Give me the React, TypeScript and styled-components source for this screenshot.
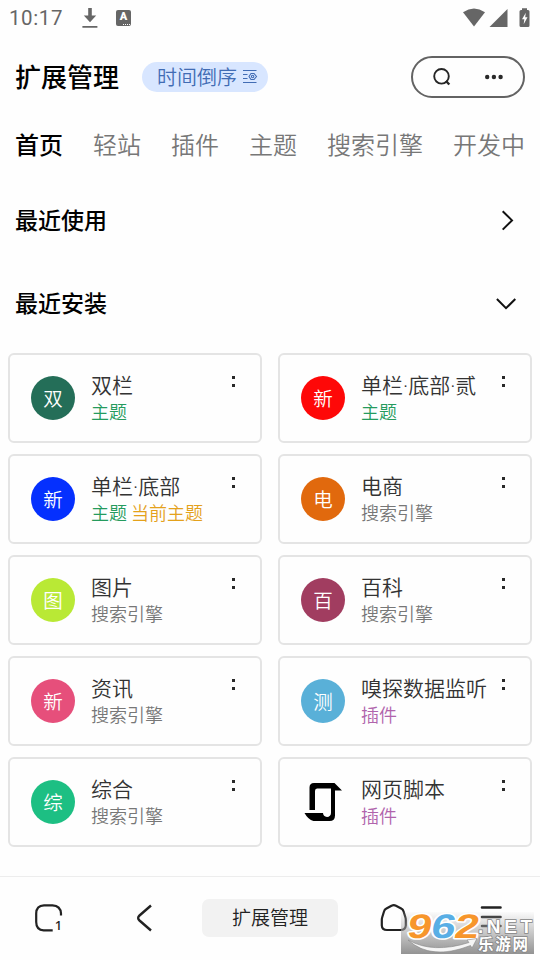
import React from "react";
import styled, { createGlobalStyle } from "styled-components";

const GlobalStyle = createGlobalStyle`
  * { box-sizing: border-box; }
  body {
    margin: 0;
    background: #fefefe;
    font-family: Roboto, "Noto Sans CJK SC", sans-serif;
  }
  svg { display: block; flex: none; overflow: visible; }
`;

const Screen = styled.div`
  width: 540px;
  height: 960px;
  display: flex;
  flex-direction: column;
  overflow: hidden;
  background: #fefefe;
`;

const StatusBar = styled.div`
  height: 37px;
  padding: 0 9px;
  display: flex;
  justify-content: space-between;
  color: #666;
`;

const StatusGroup = styled.div`
  display: flex;
  align-items: center;
`;

const Clock = styled.span`
  width: 73px;
  font-size: 20.5px;
  line-height: 37px;
  letter-spacing: 0.6px;
`;

const Header = styled.header`
  height: 80px;
  padding: 0 15px;
  display: flex;
  align-items: center;
`;

const PageTitle = styled.h1`
  margin: 0 23px 2px 0;
  width: 104px;
  white-space: nowrap;
  font: 500 26px/38px "Noto Sans CJK SC", sans-serif;
  color: #000;
`;

const SortChip = styled.button`
  width: 126px;
  height: 30px;
  padding: 0 0 0 15px;
  border: 0;
  border-radius: 15px;
  display: flex;
  align-items: center;
  gap: 6px;
  background: #d8e6ff;
  color: #416cb4;
  font: 350 20px/28px "Noto Sans CJK SC", sans-serif;
`;

const Capsule = styled.div`
  width: 114px;
  height: 42px;
  margin-left: auto;
  padding: 0 19px 0 18px;
  border: 2px solid #636363;
  border-radius: 21px;
  display: flex;
  align-items: center;
  justify-content: space-between;
`;

const Tabs = styled.nav`
  height: 57px;
  padding: 0 15px 3px;
  display: flex;
  align-items: center;
  gap: 30px;
`;

const Tab = styled.span<{ $active?: boolean }>`
  white-space: nowrap;
  font-family: "Noto Sans CJK SC", sans-serif;
  font-size: 24px;
  line-height: 36px;
  font-weight: ${(p) => (p.$active ? 500 : 350)};
  color: ${(p) => (p.$active ? "#000" : "#777")};
`;

const Section = styled.div<{ $height: number }>`
  height: ${(p) => p.$height}px;
  padding: 0 24px 0 15px;
  display: flex;
  align-items: center;
  justify-content: space-between;
`;

const SectionTitle = styled.h2`
  margin: 0 0 2px;
  font: 500 23px/34px "Noto Sans CJK SC", sans-serif;
  color: #000;
`;

const CardGrid = styled.main`
  padding: 13px 8px 0;
  display: grid;
  grid-template-columns: 254px 254px;
  grid-auto-rows: 90px;
  column-gap: 16px;
  row-gap: 11px;
`;

const Card = styled.article`
  padding: 0 17px 0 21px;
  border: 2px solid #e4e4e4;
  border-radius: 6px;
  display: flex;
  align-items: center;
`;

const Avatar = styled.div<{ $color: string }>`
  flex: none;
  width: 44px;
  height: 44px;
  padding-bottom: 1px;
  border-radius: 50%;
  display: flex;
  align-items: center;
  justify-content: center;
  background: ${(p) => p.$color};
  color: #fff;
  font: 350 19.5px/28px "Noto Sans CJK SC", sans-serif;
`;

const CardText = styled.div`
  flex: 1;
  min-width: 0;
  margin: 4px 0 0 16px;
  font-family: Roboto, "Noto Sans CJK SC", sans-serif;
  white-space: nowrap;
`;

const CardName = styled.div`
  height: 27px;
  font-size: 21px;
  line-height: 26px;
  font-weight: 350;
  color: #333;
`;

const Tags = styled.div`
  display: flex;
  gap: 4px;
  height: 27px;
  font-size: 18px;
  line-height: 26px;
  font-weight: 350;
`;

const Tag = styled.span<{ $color: string }>`
  color: ${(p) => p.$color};
`;

const MoreDots = styled.div`
  align-self: flex-start;
  width: 11px;
  margin-top: 21px;
  display: flex;
  flex-direction: column;
  align-items: flex-start;
  gap: 5px;
  &::before,
  &::after {
    content: "";
    width: 3px;
    height: 3px;
    background: #292929;
  }
`;

const BottomBar = styled.footer`
  height: 84px;
  margin-top: auto;
  border-top: 1px solid #ededed;
  position: relative;
  display: grid;
  grid-template-columns: 97px 94px 158px 90px 103px;
  align-items: center;
  justify-items: center;
  padding-bottom: 1px;
`;

const AddressPill = styled.div`
  width: 136px;
  height: 38px;
  border-radius: 7px;
  background: #f2f2f2;
  text-align: center;
  font: 350 19px/36px "Noto Sans CJK SC", sans-serif;
  color: #222;
`;

const Watermark = styled.div`
  position: absolute;
  left: 401px;
  top: 35px;
  width: 133px;
  height: 42px;
  background: linear-gradient(rgba(220, 220, 220, 0.1), rgba(165, 165, 165, 0.85) 70%, #939393);
`;

const DownloadIcon = () => (
  <svg width="16" height="22" viewBox="0 0 16 22" fill="#666">
    <path d="M6.200 0h3.600v7.500h4.400L8 14.300 1.800 7.500h4.400zM.4 18h15v1.800H.4z" />
  </svg>
);

const KeyboardIcon = styled.div`
  position: relative;
  width: 15px;
  height: 16px;
  margin: 0 0 1px 18px;
  border-radius: 2px;
  background: #666;
  color: #fff;
  text-align: center;
  font: 900 11px/14px Roboto, sans-serif;
  &::after {
    content: "";
    position: absolute;
    right: 1px;
    bottom: 1px;
    width: 7px;
    border-bottom: 1.5px dotted #fff;
  }
`;

const SystemIcons = () => (
  <svg width="69" height="22" viewBox="0 0 69 22" fill="#666">
    <path d="M1 4.200Q12 -3.200 23 4.200L12 18.500z" />
    <path d="M45.500 1v18h-18z" />
    <path d="M60 .3h5v1.600h1q1.500 0 1.500 1.500v14.200q0 1.500-1.500 1.500h-7q-1.500 0-1.500-1.500v-14.200q0-1.500 1.500-1.500h1z" />
    <path d="M63.800 4.800l-3.800 6.500h2.300l-.6 5 3.800-7h-2.300z" fill="#fff" />
  </svg>
);

const SortIcon = () => (
  <svg width="14" height="14" viewBox="0 0 14 14" fill="none" stroke="#416cb4" strokeWidth="1.100">
    <path d="M0 .5h13.500M0 4.500h4.500M0 8.500h4.500M0 12.500h13.500M6 6.500l2-3h3l2.500 3L11 9.500H8z" />
    <circle cx="9.600" cy="6.500" r="1.200" />
  </svg>
);

const SearchIcon = () => (
  <svg width="22" height="22" viewBox="0 0 22 22" fill="none" stroke="#252525" strokeWidth="1.900">
    <circle cx="10.500" cy="10.300" r="7.300" />
    <path d="M15 15L18.300 18.500" strokeWidth="2.400" />
  </svg>
);

const DotsIcon = () => (
  <svg width="20" height="6" viewBox="0 0 20 6" fill="#292929">
    <circle cx="3.200" cy="3" r="2.200" />
    <circle cx="9.900" cy="3" r="2.200" />
    <circle cx="16.600" cy="3" r="2.200" />
  </svg>
);

const Chevron = ({ down = false }: { down?: boolean }) => (
  <svg width="20" height="20" viewBox="0 0 20 20" fill="none" stroke="#111" strokeWidth="2">
    <path d={down ? "M.9 6L10 15.200 19.300 6" : "M6.700 1.200L16 10.400 6.700 19.600"} />
  </svg>
);

const ScriptIcon = () => (
  <svg width="44" height="44" viewBox="0 0 44 44" fill="#000">
    <path d="M8.500 30V7.500Q8.500 3 13 3H33.500L41 10.500H34V35.500Q34 41 28.500 41H12.500Q7 39.500 3.500 33H22Q22.200 36.500 26 37 29.800 36.700 30 33V8.500H16Q14 8.500 14 11V30z" />
  </svg>
);

const TabsIcon = () => (
  <svg width="30" height="30" viewBox="0 0 30 30" fill="none" stroke="#222" strokeWidth="2.200">
    <path d="M27 12.500V10.500Q26.500 2.500 18.500 2.300H10Q2.300 2.500 2.200 10.500v8.500q0 8 7.500 8.300h9" />
    <text x="20.800" y="27" fill="#222" stroke="none" fontFamily="Noto Sans" fontWeight="500" fontSize="13">1</text>
  </svg>
);

const BackIcon = () => (
  <svg width="16" height="28" viewBox="0 0 16 28" fill="none" stroke="#222" strokeWidth="2.400">
    <path d="M15 1.500L3.500 11.500Q.8 14 3.500 16.500L15 26.500" />
  </svg>
);

const HomeIcon = () => (
  <svg width="28" height="28" viewBox="0 0 28 28" fill="none" stroke="#222" strokeWidth="2.200">
    <path d="M11.500 1.700L6 4.800Q4.600 5.500 4 7.500L2.300 13Q1.800 14.500 1.800 16v5.500Q2 26 7 26h13.500q5 0 5.300-4.500V16q0-1.500-.5-3L23.600 7.500q-.6-2-2-2.700L16 1.700q-2.200-1-4.500 0z" />
  </svg>
);

const MenuIcon = () => (
  <svg width="22" height="24" viewBox="0 0 22 24" stroke="#222" strokeWidth="2.600" strokeLinecap="round">
    <path d="M2 1.500h18.500M2 11h18.500M2 20h18.500" />
  </svg>
);

const WatermarkLogo = () => (
  <svg width="133" height="42" viewBox="0 0 133 42">
    <g
      fontFamily="Liberation Sans"
      fontWeight="700"
      fontSize="34"
      stroke="#fff"
      strokeWidth="3"
      strokeLinejoin="round"
      paintOrder="stroke"
      transform="translate(5 25.500) skewX(-10) scale(1.280 1)"
    >
      <text x="0" y="0" fill="#f7962b">9</text>
      <text x="18.500" y="0" fill="#58aee5">6</text>
      <text x="37" y="0" fill="#f7962b">2</text>
    </g>
    <g fill="#fff" stroke="#858585" strokeWidth="1.500" paintOrder="stroke" fontWeight="700">
      <text x="77" y="20.500" fontFamily="Liberation Sans" fontSize="19" textLength="54">.NET</text>
      <text x="77" y="37.500" fontFamily="Noto Sans CJK SC" fontSize="15.500" textLength="50">乐游网</text>
    </g>
    <path d="M7 28Q32 42 68 30.500l-2-2.500 10-1.500-5 9.500-1.500-2.500Q30 49 7 28z" fill="#f5f5f5" stroke="#888" strokeWidth=".6" />
  </svg>
);

type TagInfo = [label: string, color: string];
const theme: TagInfo = ["主题", "#259b5d"];
const current: TagInfo = ["当前主题", "#e4a11b"];
const engine: TagInfo = ["搜索引擎", "#777"];
const plugin: TagInfo = ["插件", "#b064ac"];

const items: { name: string; glyph?: string; color?: string; tags: TagInfo[] }[] = [
  { name: "双栏", glyph: "双", color: "#246e58", tags: [theme] },
  { name: "单栏·底部·贰", glyph: "新", color: "#fe0808", tags: [theme] },
  { name: "单栏·底部", glyph: "新", color: "#0530fe", tags: [theme, current] },
  { name: "电商", glyph: "电", color: "#e1690d", tags: [engine] },
  { name: "图片", glyph: "图", color: "#b9e935", tags: [engine] },
  { name: "百科", glyph: "百", color: "#a13d60", tags: [engine] },
  { name: "资讯", glyph: "新", color: "#e64f7b", tags: [engine] },
  { name: "嗅探数据监听", glyph: "测", color: "#59b0d8", tags: [plugin] },
  { name: "综合", glyph: "综", color: "#1dbf83", tags: [engine] },
  { name: "网页脚本", tags: [plugin] },
];

const tabs = ["首页", "轻站", "插件", "主题", "搜索引擎", "开发中"];

export default function App() {
  return (
    <>
      <GlobalStyle />
      <Screen>
        <StatusBar>
          <StatusGroup>
            <Clock>10:17</Clock>
            <DownloadIcon />
            <KeyboardIcon>A</KeyboardIcon>
          </StatusGroup>
          <StatusGroup>
            <SystemIcons />
          </StatusGroup>
        </StatusBar>
        <Header>
          <PageTitle>扩展管理</PageTitle>
          <SortChip>
            时间倒序
            <SortIcon />
          </SortChip>
          <Capsule>
            <SearchIcon />
            <DotsIcon />
          </Capsule>
        </Header>
        <Tabs>
          {tabs.map((label, i) => (
            <Tab key={label} $active={i === 0}>{label}</Tab>
          ))}
        </Tabs>
        <Section $height={92}>
          <SectionTitle>最近使用</SectionTitle>
          <Chevron />
        </Section>
        <Section $height={74}>
          <SectionTitle>最近安装</SectionTitle>
          <Chevron down />
        </Section>
        <CardGrid>
          {items.map((item) => (
            <Card key={item.name}>
              {item.glyph ? <Avatar $color={item.color!}>{item.glyph}</Avatar> : <ScriptIcon />}
              <CardText>
                <CardName>{item.name}</CardName>
                <Tags>
                  {item.tags.map(([label, color]) => (
                    <Tag key={label} $color={color}>{label}</Tag>
                  ))}
                </Tags>
              </CardText>
              <MoreDots />
            </Card>
          ))}
        </CardGrid>
        <BottomBar>
          <TabsIcon />
          <BackIcon />
          <AddressPill>扩展管理</AddressPill>
          <HomeIcon />
          <MenuIcon />
          <Watermark>
            <WatermarkLogo />
          </Watermark>
        </BottomBar>
      </Screen>
    </>
  );
}
